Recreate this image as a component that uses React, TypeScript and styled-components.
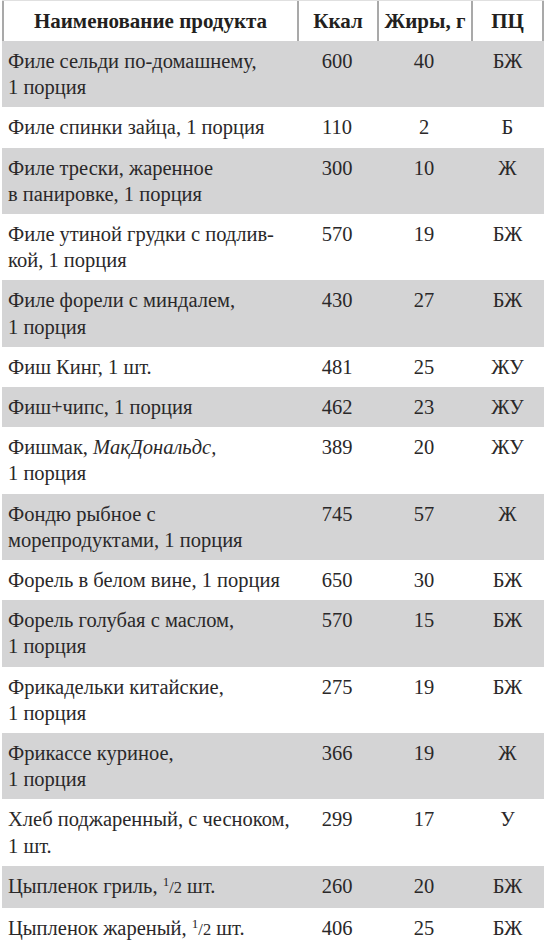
import React, { FC, ReactNode } from "react"
import styled, { createGlobalStyle } from "styled-components"

const GlobalStyle = createGlobalStyle`
  html, body {
    margin: 0;
    padding: 0;
    background: #ffffff;
  }
  body {
    font-family: "Liberation Serif", "Times New Roman", serif;
    color: #2a2829;
  }
`

interface IItem {
  name: ReactNode
  kcal: string
  fat: string
  pc: string
}

const Half: FC = () => (
  <Frac>
    <sup>1</sup>/<span className="den">2</span>
  </Frac>
)

const items: IItem[] = [
  { name: <>Филе сельди по-домашнему,<br />1 порция</>, kcal: "600", fat: "40", pc: "БЖ" },
  { name: "Филе спинки зайца, 1 порция", kcal: "110", fat: "2", pc: "Б" },
  { name: <>Филе трески, жаренное<br />в панировке, 1 порция</>, kcal: "300", fat: "10", pc: "Ж" },
  { name: <>Филе утиной грудки с подлив-<br />кой, 1 порция</>, kcal: "570", fat: "19", pc: "БЖ" },
  { name: <>Филе форели с миндалем,<br />1 порция</>, kcal: "430", fat: "27", pc: "БЖ" },
  { name: "Фиш Кинг, 1 шт.", kcal: "481", fat: "25", pc: "ЖУ" },
  { name: "Фиш+чипс, 1 порция", kcal: "462", fat: "23", pc: "ЖУ" },
  { name: <>Фишмак, <i>МакДональдс,</i><br />1 порция</>, kcal: "389", fat: "20", pc: "ЖУ" },
  { name: <>Фондю рыбное с<br />морепродуктами, 1 порция</>, kcal: "745", fat: "57", pc: "Ж" },
  { name: "Форель в белом вине, 1 порция", kcal: "650", fat: "30", pc: "БЖ" },
  { name: <>Форель голубая с маслом,<br />1 порция</>, kcal: "570", fat: "15", pc: "БЖ" },
  { name: <>Фрикадельки китайские,<br />1 порция</>, kcal: "275", fat: "19", pc: "БЖ" },
  { name: <>Фрикассе куриное,<br />1 порция</>, kcal: "366", fat: "19", pc: "Ж" },
  { name: <>Хлеб поджаренный, с чесноком,<br />1 шт.</>, kcal: "299", fat: "17", pc: "У" },
  { name: <>Цыпленок гриль, <Half /> шт.</>, kcal: "260", fat: "20", pc: "БЖ" },
  { name: <>Цыпленок жареный, <Half /> шт.</>, kcal: "406", fat: "25", pc: "БЖ" },
]

export default function App() {
  return (
    <>
      <GlobalStyle />
      <Table>
        <Head>
          <HeadCell>Наименование продукта</HeadCell>
          <HeadCell>Ккал</HeadCell>
          <HeadCell>Жиры, г</HeadCell>
          <HeadCell>ПЦ</HeadCell>
        </Head>
        {items.map((it, i) => (
          <Row key={i} shaded={i % 2 === 0}>
            <NameCell>{it.name}</NameCell>
            <ValueCell>{it.kcal}</ValueCell>
            <ValueCell>{it.fat}</ValueCell>
            <ValueCell>{it.pc}</ValueCell>
          </Row>
        ))}
      </Table>
    </>
  )
}

const columns = "295px 80px 94px 73px"

const Table = styled.div`
  display: flex;
  flex-direction: column;
  width: 542px;
  margin-left: 2px;
  font-family: "Liberation Serif", "Times New Roman", serif;
`

const Head = styled.div`
  display: grid;
  grid-template-columns: ${columns};
  height: 41px;
  border-top: 1px solid #e0e0e0;
  box-sizing: border-box;
`

const HeadCell = styled.div`
  display: flex;
  align-items: center;
  justify-content: center;
  font-weight: 700;
  font-size: 21px;
  white-space: nowrap;
  color: #231f20;
  border-left: 2px solid #a9a9a9;

  &:last-child {
    border-right: 2px solid #a9a9a9;
  }
`

const Row = styled.div<{ shaded: boolean }>`
  display: grid;
  grid-template-columns: ${columns};
  background: ${({ shaded }) => (shaded ? "#d4d4d5" : "#ffffff")};
  padding: 7px 0;
  font-size: 20.5px;
  line-height: 26.2px;
`

const NameCell = styled.div`
  padding-left: 6px;
  white-space: nowrap;

  & i {
    font-style: italic;
  }
`

const ValueCell = styled.div`
  text-align: center;
`

const Frac = styled.span`
  font-size: 0.8em;

  & sup {
    font-size: 0.8em;
    line-height: 0;
    vertical-align: 0.55em;
  }

  & .den {
    font-size: 1em;
  }
`
